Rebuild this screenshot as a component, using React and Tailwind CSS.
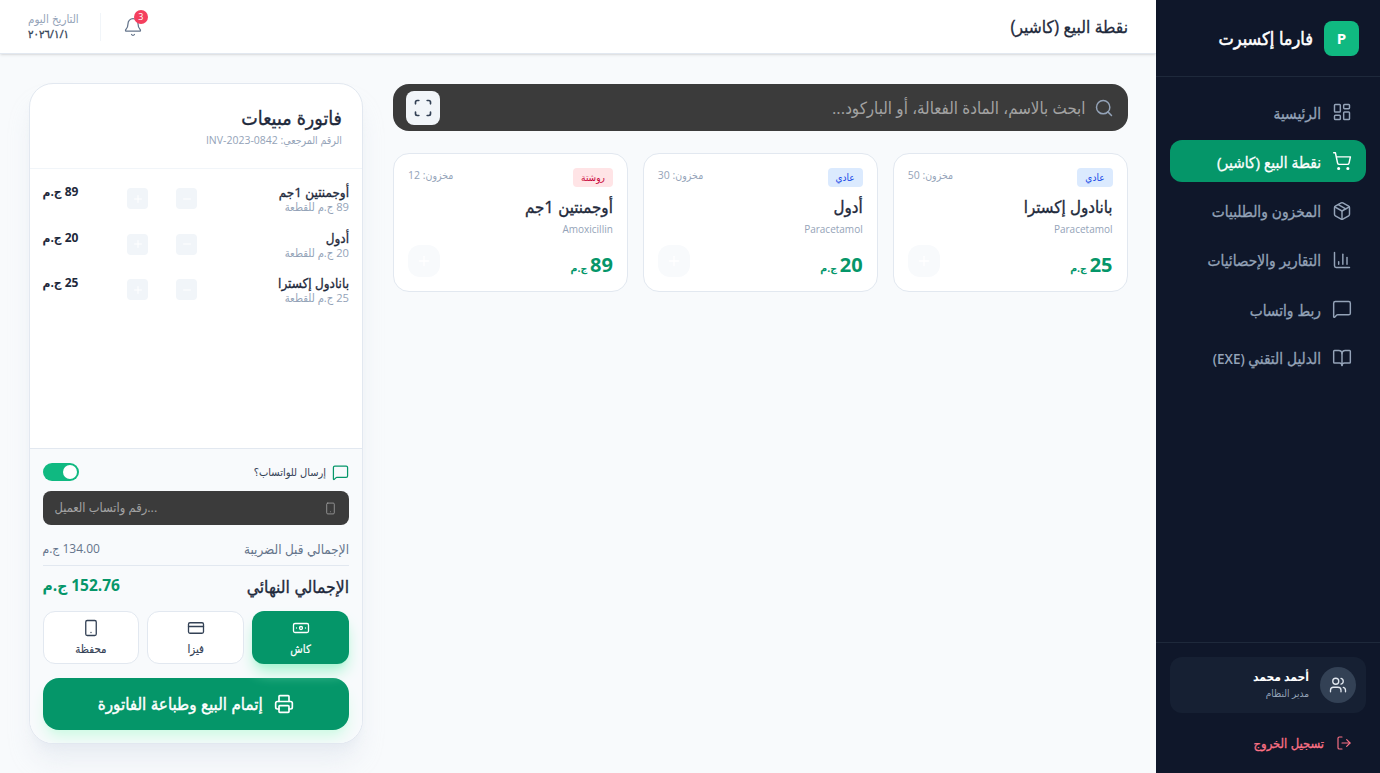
import React from 'react';
import { LayoutDashboard, ShoppingCart, Package, ChartColumn, MessageSquare, BookOpen, Users, LogOut, Bell, Search, Scan, Plus, Minus, Smartphone, CreditCard, Banknote, Printer } from 'lucide-react';

const navItems = [
  { icon: LayoutDashboard, label: 'الرئيسية' },
  { icon: ShoppingCart, label: 'نقطة البيع (كاشير)', active: true },
  { icon: Package, label: 'المخزون والطلبيات' },
  { icon: ChartColumn, label: 'التقارير والإحصائيات' },
  { icon: MessageSquare, label: 'ربط واتساب' },
  { icon: BookOpen, label: 'الدليل التقني', suffix: '(EXE)' },
];

const products = [
  { name: 'بانادول إكسترا', generic: 'Paracetamol', price: 25, stock: 50, tag: 'عادي', tagCls: 'bg-blue-100 text-blue-700' },
  { name: 'أدول', generic: 'Paracetamol', price: 20, stock: 30, tag: 'عادي', tagCls: 'bg-blue-100 text-blue-700' },
  { name: 'أوجمنتين 1جم', generic: 'Amoxicillin', price: 89, stock: 12, tag: 'روشتة', tagCls: 'bg-rose-100 text-rose-700' },
];

const cart = [
  { name: 'أوجمنتين 1جم', price: 89 },
  { name: 'أدول', price: 20 },
  { name: 'بانادول إكسترا', price: 25 },
];

const Sidebar = () => (
  <aside className="w-[224px] h-full shrink-0 bg-[#0f172a] flex flex-col">
    <div className="h-[77px] px-[21px] flex items-center gap-[11px] border-b border-[#1e293b]">
      <div className="w-[35px] h-[35px] rounded-lg bg-[#10b981] flex items-center justify-center text-white font-bold text-[15px]">P</div>
      <span className="text-white text-[18px] [-webkit-text-stroke:0.5px]">فارما إكسبرت</span>
    </div>
    <nav className="flex-1 pt-[14px] px-[14px] flex flex-col gap-[7.25px]">
      {navItems.map(({ icon: Icon, label, suffix, active }) => (
        <div key={label} className={`h-[42px] rounded-xl px-[14px] flex items-center gap-[11px] whitespace-nowrap ${active ? 'bg-[#059669] text-white' : 'text-[#94a3b8]'}`}>
          <Icon size={20} strokeWidth={1.75} />
          <span className="mt-[1px] text-[15.3px] leading-6 [-webkit-text-stroke:0.3px]">{label}{suffix && <span className="text-[13.5px] font-semibold [-webkit-text-stroke:0px]"> {suffix}</span>}</span>
        </div>
      ))}
    </nav>
    <div className="h-[131px] border-t border-[#1e293b] px-[14px] pt-[14px]">
      <div className="h-[56px] rounded-xl bg-[#1e293b]/50 px-[10px] flex items-center gap-[11px]">
        <div className="w-[36px] h-[36px] rounded-full bg-[#334155] flex items-center justify-center text-[#e2e8f0]">
          <Users size={18} strokeWidth={1.75} />
        </div>
        <div className="flex flex-col">
          <span className="text-white font-bold text-[12px] leading-4">أحمد محمد</span>
          <span className="text-[#94a3b8] text-[10px] leading-4">مدير النظام</span>
        </div>
      </div>
      <div className="mt-[22px] px-[14px] flex items-center gap-[12px] text-[#fb7185] text-[12.9px] leading-4 [-webkit-text-stroke:0.3px]">
        <LogOut size={16} strokeWidth={1.75} />
        <span>تسجيل الخروج</span>
      </div>
    </div>
  </aside>
);

const ProductCard = ({ p }) => (
  <div className="flex-1 h-[139px] bg-white rounded-2xl border border-[#e2e8f0] p-[14px] flex flex-col">
    <div className="flex items-start justify-between">
      <span className={`h-[19px] px-[8px] rounded text-[10px] leading-[19px] ${p.tagCls}`}>{p.tag}</span>
      <span className="text-[10.5px] leading-[14px] text-[#94a3b8]">مخزون: {p.stock}</span>
    </div>
    <h3 className="mt-[8px] text-[16.75px] leading-6 text-[#1e293b] [-webkit-text-stroke:0.35px]">{p.name}</h3>
    <p className="mt-[2px] text-[10px] leading-4 text-[#94a3b8]">{p.generic}</p>
    <div className="mt-auto flex items-end justify-between">
      <p className="-mb-[3px] text-[20px] leading-6 font-bold text-[#059669]">{p.price}<span className="text-[10.5px]"> ج.م</span></p>
      <button className="w-[32px] h-[32px] rounded-xl bg-[#f8fafc] flex items-center justify-center text-white">
        <Plus size={16} />
      </button>
    </div>
  </div>
);

const CartRow = ({ item }) => (
  <div className="flex items-start h-[45.5px]">
    <div className="w-[130px]">
      <p className="text-[13.4px] leading-4 text-[#1e293b] [-webkit-text-stroke:0.3px]">{item.name}</p>
      <p className="text-[11.2px] leading-[14px] text-[#94a3b8]">{item.price} ج.م للقطعة</p>
    </div>
    <div className="flex-1 flex items-center gap-[28px] mt-[4px] pr-[22px]">
      <button className="w-[21px] h-[21px] rounded bg-[#f1f5f9] flex items-center justify-center text-white"><Minus size={12} /></button>
      <button className="w-[21px] h-[21px] rounded bg-[#f1f5f9] flex items-center justify-center text-white"><Plus size={12} /></button>
    </div>
    <p className="w-[50px] text-left text-[12px] leading-4 font-bold text-[#1e293b]">{item.price} ج.م</p>
  </div>
);

const Invoice = () => (
  <section className="w-[334.5px] h-[661px] shrink-0 bg-white rounded-3xl border border-[#e2e8f0] shadow-xl shadow-slate-200/70 overflow-hidden flex flex-col">
    <div className="h-[85px] shrink-0 border-b border-[#f1f5f9] px-[20px] pt-[20px]">
      <h2 className="text-[19.5px] leading-[28px] text-[#1e293b] [-webkit-text-stroke:0.35px]">فاتورة مبيعات</h2>
      <p className="text-[10.5px] leading-4 text-[#94a3b8]">الرقم المرجعي: INV-2023-0842</p>
    </div>
    <div className="flex-1 px-[13px] pt-[15px]">
      {cart.map((item) => <CartRow key={item.name} item={item} />)}
    </div>
    <div className="h-[295px] shrink-0 bg-[#f8fafc] border-t border-[#e2e8f0] px-[13px] pt-[14px]">
      <div className="flex items-center justify-between h-[18px]">
        <div className="flex items-center gap-[6px]">
          <MessageSquare size={17} strokeWidth={1.75} className="text-[#059669]" />
          <span className="text-[11px] text-[#334155]">إرسال للواتساب؟</span>
        </div>
        <div className="w-[36px] h-[18px] rounded-full bg-[#10b981] relative">
          <span className="absolute left-[20px] top-[2px] w-[14px] h-[14px] rounded-full bg-white" />
        </div>
      </div>
      <div className="mt-[10px] h-[34px] rounded-lg bg-[#3b3b3b] px-[12px] flex items-center justify-between text-[#a3a3a3]">
        <Smartphone size={13} strokeWidth={1.5} />
        <span dir="ltr" className="text-[12.75px]">رقم واتساب العميل...</span>
      </div>
      <div className="mt-[14px] h-[27px] border-b border-[#e2e8f0] flex items-start justify-between leading-[20px] text-[#64748b]">
        <span className="text-[13.4px]">الإجمالي قبل الضريبة</span>
        <span className="text-[12px]">134.00 ج.م</span>
      </div>
      <div className="mt-[7px] flex items-center justify-between h-[25px]">
        <span className="text-[17.4px] leading-6 text-[#1e293b] [-webkit-text-stroke:0.35px]">الإجمالي النهائي</span>
        <span className="text-[15.5px] font-bold text-[#059669]">152.76 ج.م</span>
      </div>
      <div className="mt-[13px] grid grid-cols-3 gap-[8px]">
        <button className="h-[53px] rounded-xl bg-[#059669] text-white shadow-lg shadow-emerald-200 flex flex-col items-center justify-center gap-[4px] text-[11.4px] leading-4 [-webkit-text-stroke:0.15px]">
          <Banknote size={18} strokeWidth={1.75} />
          <span>كاش</span>
        </button>
        <button className="h-[53px] rounded-xl bg-white border border-[#e2e8f0] text-[#334155] flex flex-col items-center justify-center gap-[4px] text-[11.4px] leading-4 [-webkit-text-stroke:0.15px]">
          <CreditCard size={18} strokeWidth={1.75} />
          <span>فيزا</span>
        </button>
        <button className="h-[53px] rounded-xl bg-white border border-[#e2e8f0] text-[#334155] flex flex-col items-center justify-center gap-[4px] text-[11.4px] leading-4 [-webkit-text-stroke:0.15px]">
          <Smartphone size={18} strokeWidth={1.75} />
          <span>محفظة</span>
        </button>
      </div>
      <button className="mt-[14px] w-full h-[52px] rounded-2xl bg-[#059669] text-white shadow-lg shadow-emerald-100 flex items-center justify-center gap-[11px] text-[16.9px] [-webkit-text-stroke:0.4px]">
        <Printer size={20} strokeWidth={2} />
        <span>إتمام البيع وطباعة الفاتورة</span>
      </button>
    </div>
  </section>
);

export default function App() {
  return (
    <div dir="rtl" className="w-full h-screen overflow-hidden flex bg-[#f8fafc] font-['Open_Sans','DejaVu_Sans_Condensed','DejaVu_Sans',sans-serif]">
      <Sidebar />
      <div className="flex-1 min-w-0 flex flex-col">
        <header className="h-[54px] shrink-0 bg-white border-b border-[#e2e8f0] shadow-sm px-[28px] flex items-center justify-between">
          <h1 className="text-[17.3px] text-[#1e293b] [-webkit-text-stroke:0.3px]">نقطة البيع (كاشير)</h1>
          <div className="flex items-center gap-[21.5px]">
            <div className="relative text-[#64748b]">
              <Bell size={20} strokeWidth={1.5} />
              <span className="absolute -top-[7px] -right-[5px] w-[14px] h-[14px] rounded-full bg-[#f43f5e] text-white text-[9px] leading-[14px] text-center">3</span>
            </div>
            <div className="w-px h-[28px] bg-[#f1f5f9]" />
            <div className="text-left">
              <p className="text-[11.5px] leading-[14px] text-[#94a3b8]">التاريخ اليوم</p>
              <p className="text-[11.3px] leading-4 text-[#334155] [-webkit-text-stroke:0.3px]">٢٠٢٦/١/١</p>
            </div>
          </div>
        </header>
        <main className="flex-1 min-h-0 pt-[29px] pr-[28.5px] flex gap-[30px]">
          <div className="w-[734.5px] shrink-0 pt-px">
            <div className="h-[47px] rounded-2xl bg-[#3b3b3b] pr-[14px] pl-[13px] flex items-center justify-between">
              <div className="flex items-center gap-[8px] text-[#94a3b8]">
                <Search size={20} strokeWidth={1.75} />
                <span className="text-[16.75px] text-[#a3a3a3]">ابحث بالاسم، المادة الفعالة، أو الباركود...</span>
              </div>
              <button className="w-[34px] h-[34px] rounded-lg bg-[#f1f5f9] flex items-center justify-center text-[#334155]">
                <Scan size={20} strokeWidth={2} />
              </button>
            </div>
            <div className="mt-[22px] flex gap-[15px]">
              {products.map((p) => <ProductCard key={p.name} p={p} />)}
            </div>
          </div>
          <Invoice />
        </main>
      </div>
    </div>
  );
}
